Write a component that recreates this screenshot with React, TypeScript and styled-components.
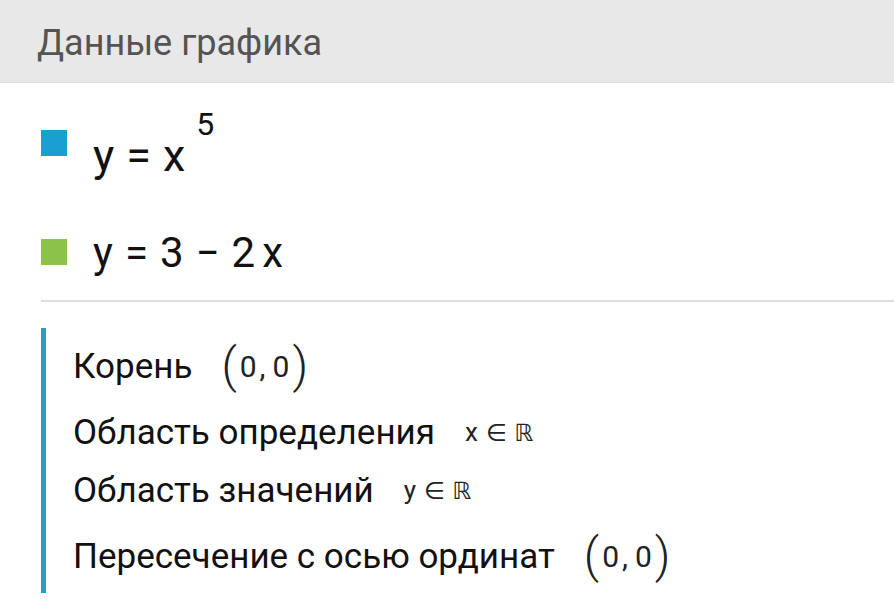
import styled, { createGlobalStyle } from 'styled-components'

const Global = createGlobalStyle`
  html, body {
    margin: 0;
    padding: 0;
    background: #ffffff;
  }
  body {
    font-family: Roboto, "Liberation Sans", sans-serif;
    color: #111;
  }
`

const Page = styled.div`
  width: 894px;
  height: 616px;
  overflow: hidden;
  background: #fff;
`

const Header = styled.div`
  height: 83px;
  background: #e8e8e8;
  border-bottom: 1px solid #e0e0e0;
  display: flex;
  align-items: center;
  padding: 4px 0 0 37px;
  box-sizing: border-box;
  font-size: 36px;
  color: #545454;
`

const Legend = styled.div`
  display: flex;
  flex-direction: column;
  padding: 46px 0 0 41px;
  gap: 46px;
`

const LegendRow = styled.div`
  display: flex;
  align-items: flex-start;
  gap: 26px;
`

const Swatch = styled.span<{ $color: string; $drop: number }>`
  width: 26px;
  height: 26px;
  background: ${p => p.$color};
  margin-top: ${p => p.$drop}px;
  flex: none;
`

const Formula = styled.span<{ $size: number }>`
  display: inline-flex;
  align-items: baseline;
  gap: 12px;
  font-size: ${p => p.$size}px;
  color: #111;
  white-space: pre;
`

const Term = styled.span`
  display: inline-flex;
  gap: 7px;
`

const Sup = styled.span`
  font-size: 32px;
  position: relative;
  top: -36px;
  margin-left: 11px;
`

const Divider = styled.hr`
  border: none;
  height: 2px;
  background: #dedede;
  margin: 23px 0 0 41px;
`

const Info = styled.div`
  margin: 26px 0 0 41px;
  border-left: 5px solid #2a9dc4;
  padding: 8px 0 7px 27px;
  display: flex;
  flex-direction: column;
  gap: 14px;
`

const InfoRow = styled.div<{ $tall?: boolean }>`
  display: flex;
  align-items: center;
  gap: ${p => (p.$tall ? 29 : 30)}px;
  font-size: 35px;
  height: ${p => (p.$tall ? 60 : 44)}px;
  color: #111;
`

const Value = styled.span`
  display: inline-flex;
  align-items: center;
  font-size: 30px;
  color: #222;
`

const Paren = styled.span`
  font-size: 48px;
  font-weight: 300;
  line-height: 1;
`

const Digit = styled.span<{ $side: 'left' | 'right' }>`
  margin-${p => p.$side}: 3px;
`

const Comma = styled.span`
  margin: 0 7px 0 3px;
`

const SetValue = styled.span`
  display: inline-flex;
  align-items: baseline;
  gap: 8px;
  font-size: 26px;
  color: #222;
`

const MathSymbol = styled.span`
  font-family: "DejaVu Sans", Roboto, sans-serif;
  font-size: 24px;
`

function Point() {
  return (
    <Value>
      <Paren>(</Paren>
      <Digit $side="left">0</Digit>
      <Comma>,</Comma>
      <Digit $side="right">0</Digit>
      <Paren>)</Paren>
    </Value>
  )
}

function RealSet({ variable }: { variable: string }) {
  return (
    <SetValue>
      {variable}
      <MathSymbol>∈ ℝ</MathSymbol>
    </SetValue>
  )
}

export default function App() {
  return (
    <Page>
      <Global />
      <Header>Данные графика</Header>
      <Legend>
        <LegendRow>
          <Swatch $color="#1b9fd0" $drop={1} />
          <Formula $size={45}>
            <span>y</span>
            <span>=</span>
            <span>
              x<Sup>5</Sup>
            </span>
          </Formula>
        </LegendRow>
        <LegendRow>
          <Swatch $color="#8bc34a" $drop={11} />
          <Formula $size={42}>
            <span>y</span>
            <span>=</span>
            <span>3</span>
            <span>−</span>
            <Term>
              <span>2</span>
              <span>x</span>
            </Term>
          </Formula>
        </LegendRow>
      </Legend>
      <Divider />
      <Info>
        <InfoRow $tall>
          Корень
          <Point />
        </InfoRow>
        <InfoRow>
          Область определения
          <RealSet variable="x" />
        </InfoRow>
        <InfoRow>
          Область значений
          <RealSet variable="y" />
        </InfoRow>
        <InfoRow $tall>
          Пересечение с осью ординат
          <Point />
        </InfoRow>
      </Info>
    </Page>
  )
}
